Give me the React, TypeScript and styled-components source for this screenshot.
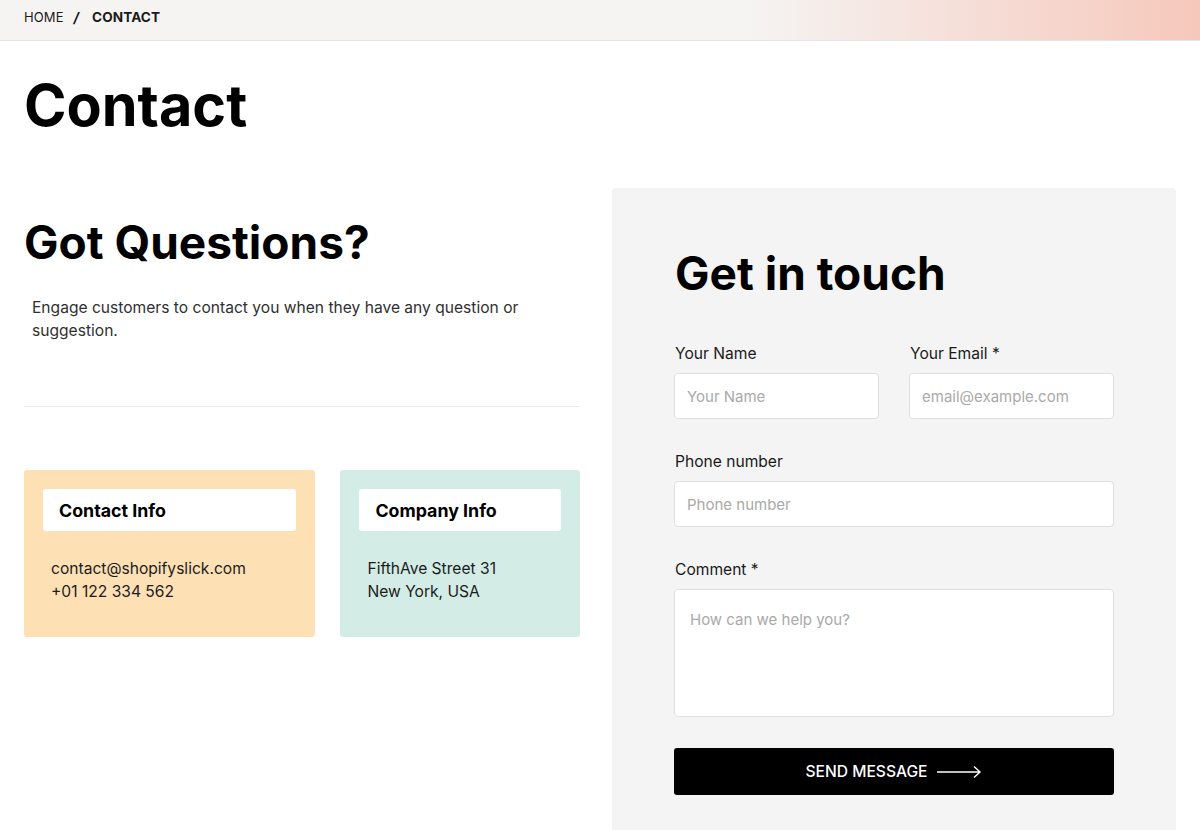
import React from "react";
import styled, { createGlobalStyle } from "styled-components";

const Global = createGlobalStyle`
  html, body { margin: 0; padding: 0; background: #fff; }
  body { font-family: Inter, "Noto Sans", Arial, sans-serif; color: #000; }
  * { box-sizing: border-box; }
`;

const Breadcrumb = styled.nav`
  height: 41px;
  border-bottom: 1px solid #e6e6e6;
  background: linear-gradient(90deg, #f5f4f3 0%, #f5f4f3 62%, #f6c8bb 100%);
  display: flex;
  align-items: center;
  padding: 0 24px 6px;
  font-size: 13px;
  color: #1a1a1a;
`;

const Crumb = styled.span<{ $active?: boolean }>`
  font-weight: ${(p) => (p.$active ? 700 : 400)};
  font-size: ${(p) => (p.$active ? "13.6px" : "13px")};
  letter-spacing: 0.1px;
`;

const Sep = styled.span`
  font-weight: 700;
  font-style: italic;
  margin: 0 13px 0 10px;
  font-size: 14px;
`;

const Main = styled.main`
  padding: 0 24px;
`;

const PageTitle = styled.h1`
  margin: 31px 0 0;
  font-size: 57.5px;
  line-height: 67px;
  font-weight: 700;
`;

const Columns = styled.div`
  display: flex;
  gap: 32px;
  margin-top: 49px;
  align-items: flex-start;
`;

const Left = styled.section`
  width: 556px;
  flex: none;
`;

const SectionTitle = styled.h2`
  margin: 26px 0 0;
  font-size: 46px;
  line-height: 57px;
  font-weight: 700;
`;

const Lead = styled.p`
  margin: 25px 0 0;
  padding-left: 8px;
  max-width: 510px;
  font-size: 15.6px;
  line-height: 23px;
  color: #303030;
`;

const Divider = styled.hr`
  margin: 64px 0 0;
  border: 0;
  border-top: 1px solid #ececec;
`;

const Cards = styled.div`
  display: flex;
  gap: 25px;
  margin-top: 63px;
`;

const Card = styled.div<{ $bg: string; $w: number }>`
  width: ${(p) => p.$w}px;
  height: 167px;
  background: ${(p) => p.$bg};
  border-radius: 3px;
  padding: 19px;
`;

const CardHead = styled.div`
  background: #fff;
  border-radius: 3px;
  height: 42px;
  display: flex;
  align-items: center;
  padding-left: 16px;
  font-size: 17.8px;
  font-weight: 700;
  color: #000;
`;

const CardBody = styled.div`
  margin-top: 26px;
  padding-left: 8px;
  font-size: 15.6px;
  line-height: 23px;
  color: #1c1c1c;
`;

const Panel = styled.section`
  width: 564px;
  flex: none;
  background: #f4f4f4;
  border-radius: 4px 4px 0 0;
  padding: 58px 62px 40px;
  min-height: 660px;
`;

const PanelTitle = styled.h2`
  margin: 0 0 0 1px;
  font-size: 46px;
  line-height: 54px;
  font-weight: 700;
`;

const Form = styled.form`
  margin-top: 44px;
  display: grid;
  grid-template-columns: minmax(0, 1fr) minmax(0, 1fr);
  column-gap: 30px;
  row-gap: 33px;
`;

const Field = styled.label<{ $full?: boolean }>`
  display: flex;
  flex-direction: column;
  min-width: 0;
  grid-column: ${(p) => (p.$full ? "1 / -1" : "auto")};
`;

const Label = styled.span`
  font-size: 15.6px;
  line-height: 20px;
  color: #1a1a1a;
  margin: 0 0 9px 1px;
`;

const Input = styled.input`
  width: 100%;
  height: 46px;
  border: 1px solid #e0e0e0;
  border-radius: 4px;
  background: #fff;
  padding: 0 12px;
  font-family: inherit;
  font-size: 15px;
  color: #222;
  outline: none;
  &::placeholder { color: #a9a9a9; }
`;

const TextArea = styled.textarea`
  width: 100%;
  height: 128px;
  border: 1px solid #e0e0e0;
  border-radius: 4px;
  background: #fff;
  padding: 20px 15px;
  font-family: inherit;
  font-size: 15px;
  line-height: 20px;
  resize: none;
  outline: none;
  &::placeholder { color: #a9a9a9; }
`;

const Button = styled.button`
  grid-column: 1 / -1;
  margin-top: -2px;
  height: 47px;
  border: 0;
  border-radius: 3px;
  background: #000;
  color: #fff;
  font-family: inherit;
  font-size: 15.6px;
  font-weight: 500;
  display: flex;
  align-items: center;
  justify-content: center;
  gap: 9px;
  cursor: pointer;
`;

export default function App() {
  return (
    <>
      <Global />
      <Breadcrumb>
        <Crumb>HOME</Crumb>
        <Sep>/</Sep>
        <Crumb $active>CONTACT</Crumb>
      </Breadcrumb>
      <Main>
        <PageTitle>Contact</PageTitle>
        <Columns>
          <Left>
            <SectionTitle>Got Questions?</SectionTitle>
            <Lead>
              Engage customers to contact you when they have any question or
              suggestion.
            </Lead>
            <Divider />
            <Cards>
              <Card $bg="#fde0b3" $w={292}>
                <CardHead>Contact Info</CardHead>
                <CardBody>
                  contact@shopifyslick.com
                  <br />
                  +01 122 334 562
                </CardBody>
              </Card>
              <Card $bg="#d3ece5" $w={240}>
                <CardHead>Company Info</CardHead>
                <CardBody>
                  FifthAve Street 31
                  <br />
                  New York, USA
                </CardBody>
              </Card>
            </Cards>
          </Left>
          <Panel>
            <PanelTitle>Get in touch</PanelTitle>
            <Form onSubmit={(e) => e.preventDefault()}>
              <Field>
                <Label>Your Name</Label>
                <Input placeholder="Your Name" />
              </Field>
              <Field>
                <Label>Your Email *</Label>
                <Input placeholder="email@example.com" />
              </Field>
              <Field $full>
                <Label>Phone number</Label>
                <Input placeholder="Phone number" />
              </Field>
              <Field $full>
                <Label>Comment *</Label>
                <TextArea placeholder="How can we help you?" />
              </Field>
              <Button type="submit">
                SEND MESSAGE
                <svg width="46" height="14" viewBox="0 0 46 14" fill="none">
                  <path d="M1 7H44M38 1.5L44 7L38 12.5" stroke="#fff" strokeWidth="1.4" />
                </svg>
              </Button>
            </Form>
          </Panel>
        </Columns>
      </Main>
    </>
  );
}
